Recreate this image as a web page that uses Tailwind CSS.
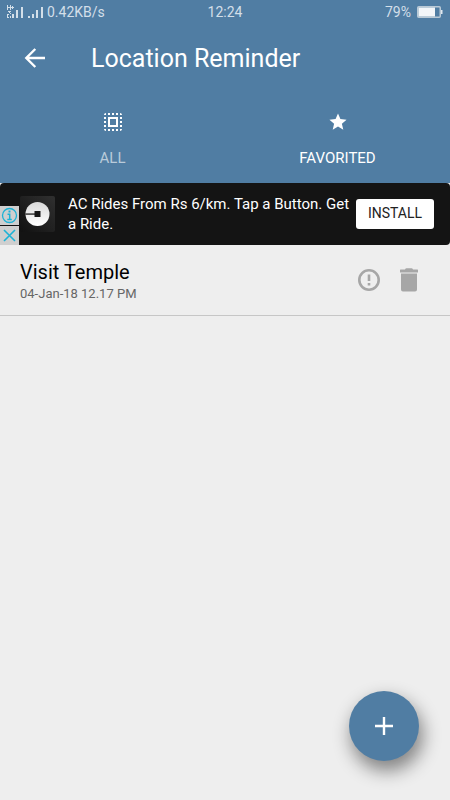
<!DOCTYPE html>
<html lang="en">
<head>
<meta charset="utf-8">
<meta name="viewport" content="width=device-width, initial-scale=1">
<title>Location Reminder</title>
<script src="https://cdn.jsdelivr.net/npm/@tailwindcss/browser@4"></script>
</head>
<body class="min-h-screen bg-[#eeeeee] font-['Roboto','Noto_Sans',sans-serif] text-black">
<header class="bg-[#507da3] text-white">
  <div class="grid h-6 grid-cols-3 items-center px-[7px] text-[14px] leading-4 text-[#d3dfe9]">
    <div class="flex items-center gap-1">
      <svg class="h-4 w-4" viewBox="0 0 16 16" fill="currentColor" aria-hidden="true">
        <path d="M0 1h1v2h2V1h1v5H3V4H1v2H0zM5 2h1v1h1v1H6v1H5V4H4V3h1zM1 7h3v1H3v1H2V8H1zM0 10h2v1H1v2H0zM3 9h1v1H3zM5 10h2v4H5zM9 6h2v8H9zM14 3h2v11h-2zM0 13h2v1H0zM3 12h1v2H3z"/>
      </svg>
      <svg class="h-4 w-4" viewBox="0 0 16 16" fill="currentColor" aria-hidden="true">
        <path d="M1 12h2v2H1zM5 10h2v4H5zM9 6h2v8H9zM14 3h2v11h-2z"/>
      </svg>
      <span>0.42KB/s</span>
    </div>
    <span class="text-center">12:24</span>
    <div class="flex items-center justify-end gap-1.5">
      <span>79%</span>
      <svg class="h-3 w-[26px]" viewBox="0 0 26 12" aria-hidden="true">
        <rect x="0.75" y="0.75" width="22.5" height="10.5" rx="1" fill="none" stroke="#b9c9d6" stroke-width="1.5"/>
        <path d="M1.500 1.500h16.500v9H1.500z" fill="#f3f6f9"/><path d="M24 4h1.5v4H24z" fill="#dfe8ef"/>
      </svg>
    </div>
  </div>
  <div class="flex h-17 items-center gap-11 px-[23px]">
    <button type="button" aria-label="Back" class="flex size-6 items-center justify-center">
      <svg class="size-6" viewBox="0 0 24 24" fill="none" stroke="currentColor" stroke-width="2.4" aria-hidden="true"><path d="M22 12H3.500M12.300 3L3.300 12l9 9"/></svg>
    </button>
    <h1 class="pt-0.5 text-[25px] leading-8">Location Reminder</h1>
  </div>
  <nav class="grid h-[91px] grid-cols-2 text-[15px] leading-5">
    <button type="button" class="flex flex-col items-center gap-3.5 pt-[18px] text-[#b9cbda]">
      <svg class="size-6 text-white" viewBox="0 0 24 24" fill="currentColor" aria-hidden="true"><path d="M3 5h2V3c-1.100 0-2 .9-2 2zm0 8h2v-2H3v2zm4 8h2v-2H7v2zM3 9h2V7H3v2zm10-6h-2v2h2V3zm6 0v2h2c0-1.100-.9-2-2-2zM5 21v-2H3c0 1.100.9 2 2 2zm-2-4h2v-2H3v2zM9 3H7v2h2V3zm2 18h2v-2h-2v2zm8-8h2v-2h-2v2zm0 8c1.100 0 2-.9 2-2h-2v2zm0-12h2V7h-2v2zm0 8h2v-2h-2v2zm-4 4h2v-2h-2v2zm0-16h2V3h-2v2zM7 17h10V7H7v10zm2-8h6v6H9V9z"/></svg>
      <span>ALL</span>
    </button>
    <button type="button" class="flex flex-col items-center gap-3.5 pt-[18px]">
      <svg class="size-6" viewBox="-2 -2 28 28" fill="currentColor" aria-hidden="true"><path d="M12 17.270L18.180 21l-1.640-7.030L22 9.240l-7.190-.61L12 2 9.190 8.630 2 9.240l5.460 4.730L5.820 21z"/></svg>
      <span>FAVORITED</span>
    </button>
  </nav>
</header>
<main>
  <aside aria-label="Advertisement" class="flex h-[62px] items-center rounded-sm bg-[#141414] pr-4 text-white">
    <div class="flex w-[19px] shrink-0 flex-col gap-px self-end">
      <button type="button" aria-label="Ad information" class="flex h-[19px] items-center justify-center bg-[#cfcfcf] text-[#1cb2d6]">
        <svg class="size-[17px]" viewBox="0 0 17 17" fill="none" stroke="currentColor" aria-hidden="true"><circle cx="8.500" cy="8.500" r="7" stroke-width="1.300"/><path d="M8.500 3.500v2" stroke-width="2"/><path d="M6.500 7.300h2.200v5M6.300 12.500h4.500" stroke-width="1.500"/></svg>
      </button>
      <button type="button" aria-label="Close ad" class="flex h-[19px] items-center justify-center bg-[#cfcfcf] text-[#1cb2d6]">
        <svg class="size-[17px]" viewBox="0 0 17 17" fill="none" stroke="currentColor" stroke-width="1.600" aria-hidden="true"><path d="M3 3l11 11M14 3L3 14"/></svg>
      </button>
    </div>
    <svg class="size-9 shrink-0" viewBox="0 0 36 36" aria-hidden="true">
      <defs><linearGradient id="tile" x1="0" y1="1" x2="1" y2="0"><stop offset="0" stop-color="#111"/><stop offset="1" stop-color="#303030"/></linearGradient>
      <linearGradient id="disc" x1="0" y1="0" x2="0" y2="1"><stop offset="0" stop-color="#d9d9d9"/><stop offset="1" stop-color="#fff"/></linearGradient></defs>
      <rect x="1" width="35" height="36" rx="2" fill="url(#tile)"/>
      <circle cx="18.500" cy="18" r="12" fill="url(#disc)"/>
      <path d="M6 17.200h11v1.800H6z" fill="#555"/><path d="M15.500 15h6v6h-6z" fill="#161616"/>
    </svg>
    <p class="ml-[13px] flex-1 text-[15px] leading-5">AC Rides From Rs 6/km. Tap a Button. Get a Ride.</p>
    <button type="button" class="h-[30px] w-[78px] shrink-0 rounded-[3px] bg-white pb-0.5 text-[14px] leading-5 text-[#222]">INSTALL</button>
  </aside>
  <ul>
    <li class="flex h-[71px] items-center justify-between border-b border-[#c6c6c6] pr-7 pl-5">
      <div class="pt-1">
        <h2 class="text-[20px] leading-6">Visit Temple</h2>
        <p class="text-[13px] leading-5 text-[#666]">04-Jan-18 12.17 PM</p>
      </div>
      <div class="flex gap-3.5 text-[#a6a6a6]">
        <button type="button" aria-label="Reminder details" class="flex size-[26px] items-center justify-center">
          <svg class="size-[26px]" viewBox="0 0 26 26" fill="none" stroke="currentColor" stroke-width="2.600" aria-hidden="true"><circle cx="13" cy="13" r="9.700"/><path d="M13 7.500v6.500M13 16v2.500"/></svg>
        </button>
        <button type="button" aria-label="Delete reminder" class="flex size-[26px] items-center justify-center">
          <svg class="size-[26px]" viewBox="0 0 26 26" fill="currentColor" aria-hidden="true"><path d="M4.500 2.500h4.500Q9.500 1.300 10.500 1.300h5Q16.500 1.300 17 2.500h4.500q.5 0 .5.500v2.500H4V3q0-.5.500-.5zM5 6.500h16V22.500q0 2-2 2H7Q5 24.500 5 22.500z"/></svg>
        </button>
      </div>
    </li>
  </ul>
</main>
<button type="button" aria-label="Add reminder" class="fixed right-[31px] bottom-[39px] flex size-[70px] items-center justify-center rounded-full bg-[#507da3] text-white shadow-[3px_9px_18px_1px_rgba(0,0,0,0.45)]">
  <svg class="size-[18px]" viewBox="0 0 18 18" fill="none" stroke="currentColor" stroke-width="2.400" aria-hidden="true"><path d="M9 0v18M0 9h18"/></svg>
</button>
</body>
</html>
